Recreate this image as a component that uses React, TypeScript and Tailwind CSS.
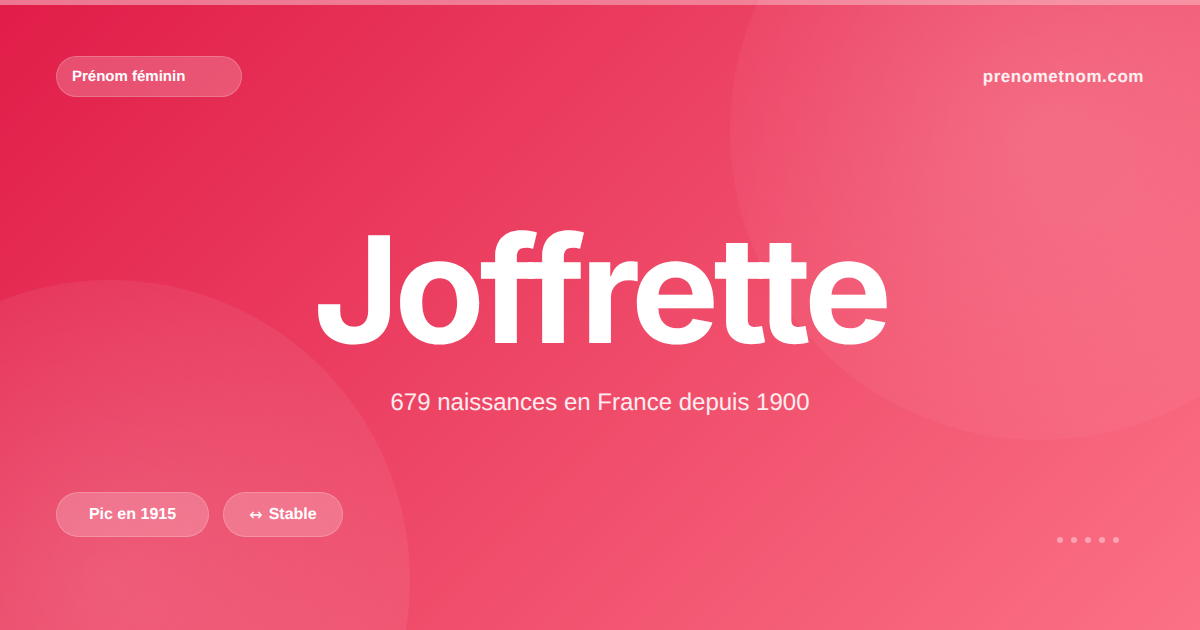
const dots = [0, 1, 2, 3, 4];

export default function App() {
  return (
    <div className="relative w-[1200px] h-[630px] overflow-hidden bg-[linear-gradient(135deg,#e11d48_0%,#fb7185_100%)] font-['Liberation_Sans',Arial,sans-serif] text-white [text-rendering:geometricPrecision]">
      <div className="absolute left-[730px] top-[-180px] w-[620px] h-[620px] rounded-full bg-[radial-gradient(circle_closest-side,rgba(255,255,255,0.15)_0%,rgba(255,255,255,0.04)_100%)]" />
      <div className="absolute left-[-190px] top-[280px] w-[600px] h-[600px] rounded-full bg-[radial-gradient(circle_closest-side,rgba(255,255,255,0.16)_0%,rgba(255,255,255,0.06)_100%)]" />

      <div className="relative flex flex-col h-full">
        <div className="h-[5px] bg-[linear-gradient(90deg,rgba(255,255,255,0.4),rgba(255,255,255,0.3))]" />

        <div className="flex items-center justify-between px-14 pt-[51px]">
          <div className="w-[186px] h-[41px] flex items-center pl-[15px] pt-px rounded-full bg-white/20 border border-white/20 text-[15px] font-bold">
            Prénom féminin
          </div>
          <div className="text-[17px] font-bold tracking-[0.55px] text-white/90">prenometnom.com</div>
        </div>

        <div className="flex flex-col items-center pt-[119px]">
          <h1 className="font-['Inter',sans-serif] text-[148px] leading-none font-bold tracking-[-5.6px]">Joffrette</h1>
          <p className="mt-[27px] text-2xl leading-none text-white/90">679 naissances en France depuis 1900</p>
        </div>

        <div className="flex items-center justify-between px-14 pt-[70px]">
          <div className="flex gap-[14px]">
            <div className="w-[153px] h-[45px] flex items-center justify-center pt-px rounded-full bg-white/20 border border-white/20 text-base font-bold">
              Pic en 1915
            </div>
            <div className="w-[120px] h-[45px] flex items-center justify-center gap-[6px] pt-px rounded-full bg-white/20 border border-white/20 text-base font-bold">
              <span className="font-['DejaVu_Sans',sans-serif] font-normal">↔</span>
              <span>Stable</span>
            </div>
          </div>
          <div className="flex gap-[8px] pt-[52px] pr-[25px]">
            {dots.map((d) => (
              <span key={d} className="w-[6px] h-[6px] rounded-full bg-white/40" />
            ))}
          </div>
        </div>
      </div>
    </div>
  );
}
